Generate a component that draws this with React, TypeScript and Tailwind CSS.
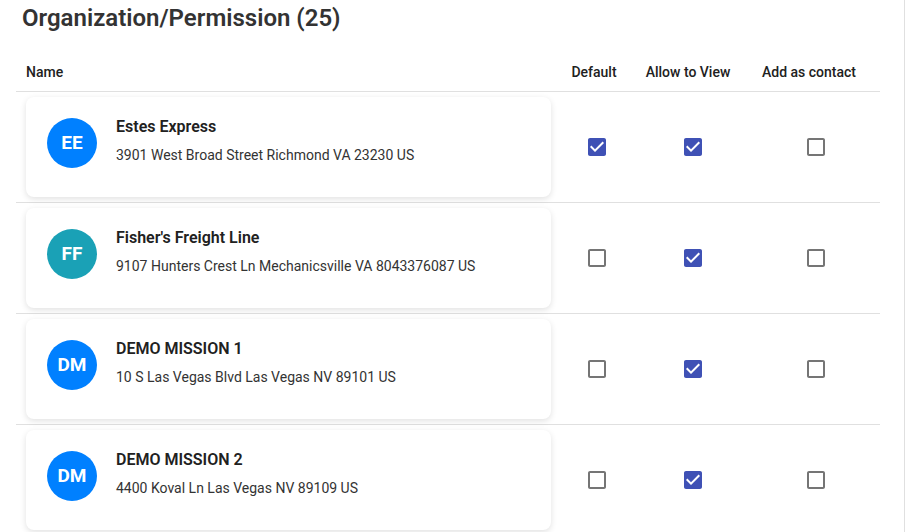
import React from "react";

type Row = {
  initials: string;
  color: string;
  name: string;
  address: string;
  def: boolean;
  view: boolean;
  contact: boolean;
};

const rows: Row[] = [
  { initials: "EE", color: "bg-[#0080ff]", name: "Estes Express", address: "3901 West Broad Street Richmond VA 23230 US", def: true, view: true, contact: false },
  { initials: "FF", color: "bg-[#1aa1b6]", name: "Fisher's Freight Line", address: "9107 Hunters Crest Ln Mechanicsville VA 8043376087 US", def: false, view: true, contact: false },
  { initials: "DM", color: "bg-[#0080ff]", name: "DEMO MISSION 1", address: "10 S Las Vegas Blvd Las Vegas NV 89101 US", def: false, view: true, contact: false },
  { initials: "DM", color: "bg-[#0080ff]", name: "DEMO MISSION 2", address: "4400 Koval Ln Las Vegas NV 89109 US", def: false, view: true, contact: false },
];

function Box({ checked }: { checked: boolean }) {
  return (
    <svg width="24" height="24" viewBox="0 0 24 24">
      {checked ? (
        <path
          fill="#3f51b5"
          d="M19 3H5c-1.11 0-2 .9-2 2v14c0 1.1.89 2 2 2h14c1.11 0 2-.9 2-2V5c0-1.1-.89-2-2-2zm-9 14l-5-5 1.41-1.41L10 14.17l7.59-7.59L19 8l-9 9z"
        />
      ) : (
        <path
          fill="#757575"
          d="M19 5v14H5V5h14m0-2H5c-1.1 0-2 .9-2 2v14c0 1.1.9 2 2 2h14c1.1 0 2-.9 2-2V5c0-1.1-.9-2-2-2z"
        />
      )}
    </svg>
  );
}

export default function App() {
  return (
    <div
      className="w-[905px] h-[532px] border-r border-[#e0e0e0] bg-white overflow-hidden"
      style={{ fontFamily: "Roboto, 'Liberation Sans', sans-serif" }}
    >
      <h1 className="pl-[22px] pt-[3px] text-[24px] leading-[30px] font-semibold text-[#333333]">
        Organization/Permission (25)
      </h1>
      <div className="ml-[16px] w-[864px] mt-[20px]">
        <div className="flex items-center h-[39px] border-b border-[#e0e0e0] text-[14px] font-medium text-[#212121]">
          <div className="flex-1 pl-[10px]">Name</div>
          <div className="w-[84px] text-center">Default</div>
          <div className="w-[104px] text-center">Allow to View</div>
          <div className="w-[140px] text-center pr-[2px]">Add as contact</div>
        </div>
        {rows.map((r, i) => (
          <div key={i} className="flex items-center h-[111px] border-b border-[#e0e0e0]">
            <div className="flex-1 pl-[10px]">
              <div className="w-[525px] h-[100px] bg-white rounded-[8px] shadow-[0_2px_6px_rgba(0,0,0,0.12)] flex items-start pl-[21px] pt-[21px]">
                <div className={`w-[50px] h-[50px] rounded-full ${r.color} flex items-center justify-center text-white text-[19px] font-bold`}>
                  {r.initials}
                </div>
                <div className="ml-[19px] -mt-[1px]">
                  <div className="text-[16px] leading-[20px] font-semibold text-[#212121]">{r.name}</div>
                  <div className="mt-[8px] text-[14px] leading-[20px] text-[#333333]">{r.address}</div>
                </div>
              </div>
            </div>
            <div className="w-[84px] flex justify-center pl-[6px]">
              <Box checked={r.def} />
            </div>
            <div className="w-[104px] flex justify-center pl-[10px]">
              <Box checked={r.view} />
            </div>
            <div className="w-[140px] flex justify-center pl-[12px]">
              <Box checked={r.contact} />
            </div>
          </div>
        ))}
      </div>
    </div>
  );
}
